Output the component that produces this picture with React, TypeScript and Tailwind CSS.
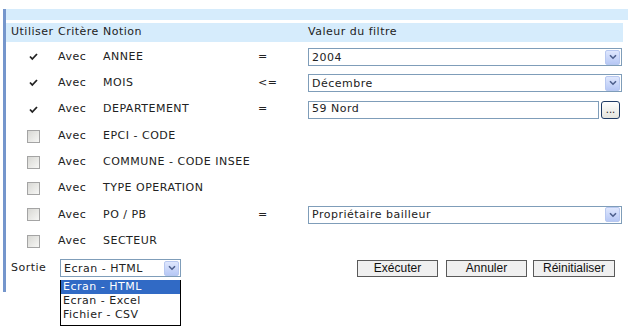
import React from 'react';

type Row = {
  checked: boolean;
  notion: string;
  op?: string;
  value?: { kind: 'select' | 'input'; text: string };
};

const rows: Row[] = [
  { checked: true, notion: 'ANNEE', op: '=', value: { kind: 'select', text: '2004' } },
  { checked: true, notion: 'MOIS', op: '<=', value: { kind: 'select', text: 'Décembre' } },
  { checked: true, notion: 'DEPARTEMENT', op: '=', value: { kind: 'input', text: '59 Nord' } },
  { checked: false, notion: 'EPCI - CODE' },
  { checked: false, notion: 'COMMUNE - CODE INSEE' },
  { checked: false, notion: 'TYPE OPERATION' },
  { checked: false, notion: 'PO / PB', op: '=', value: { kind: 'select', text: 'Propriétaire bailleur' } },
  { checked: false, notion: 'SECTEUR' },
];

function Arrow() {
  return (
    <span className="flex h-[15px] w-[15px] items-center justify-center rounded-[2px] border border-[#b8c8f0] bg-gradient-to-b from-[#dfe7fd] to-[#b7c8f5]">
      <svg width="8" height="6" viewBox="0 0 8 6">
        <path d="M1 1.2 L4 4.2 L7 1.2" fill="none" stroke="#4d5f8c" strokeWidth="1.6" />
      </svg>
    </span>
  );
}

function Select({ text, className }: { text: string; className: string }) {
  return (
    <div className={`flex h-[18px] items-center justify-between border border-[#7f9db9] bg-white pl-[3px] pr-[1px] ${className}`}>
      <span className="leading-none">{text}</span>
      <Arrow />
    </div>
  );
}

function Check({ checked }: { checked: boolean }) {
  if (checked) {
    return (
      <span className="flex h-[13px] w-[13px] items-center justify-center">
        <svg width="9" height="8" viewBox="0 0 9 8">
          <path d="M1 3.5 L3.3 6 L8 1" fill="none" stroke="#222" strokeWidth="1.8" />
        </svg>
      </span>
    );
  }
  return <span className="block h-[13px] w-[13px] border border-[#a4a4a4] bg-gradient-to-br from-[#d8d8d4] to-[#f7f7f5]" />;
}

function Button({ label, className }: { label: string; className: string }) {
  return (
    <button className={`h-[17px] border border-[#5a5a5a] bg-[#f0f0f0] font-['Liberation_Sans',Arial,sans-serif] text-[12px] leading-none tracking-normal text-[#111] ${className}`}>
      {label}
    </button>
  );
}

export default function App() {
  return (
    <div className="h-[335px] w-[632px] bg-white pl-[3px] pt-[9px] font-['DejaVu_Sans',Verdana,sans-serif] text-[11px] tracking-[0.5px] text-[#222]">
      <div className="relative w-[625px] border-l-[3px] border-[#7596cc]">
        <div className="h-[11px] w-[622px] bg-[#d6ecfc]" />
        <div className="mt-[3px] flex h-[19px] w-[617px] items-center bg-[#d6ecfc] pl-[5px]">
          <span className="w-[47px]">Utiliser</span>
          <span className="w-[45px]">Critère</span>
          <span className="w-[205px]">Notion</span>
          <span>Valeur du filtre</span>
        </div>
        <div className="pt-[2px]">
          {rows.map((r) => (
            <div key={r.notion} className="flex h-[26.3px] items-center">
              <span className="w-[52px] pl-[21px]">
                <Check checked={r.checked} />
              </span>
              <span className="w-[45px]">Avec</span>
              <span className="w-[155px]">{r.notion}</span>
              <span className="w-[50px]">{r.op ?? ''}</span>
              {r.value?.kind === 'select' && <Select text={r.value.text} className="w-[314px]" />}
              {r.value?.kind === 'input' && (
                <div className="flex items-center gap-[2px]">
                  <div className="flex h-[18px] w-[291px] items-center border border-[#7f9db9] bg-white pl-[3px]">{r.value.text}</div>
                  <span className="flex h-[18px] w-[19px] items-end justify-center rounded-[3px] border border-[#1f3b66] bg-gradient-to-b from-white to-[#e4e4de] pb-[3px] text-[10px] leading-none tracking-normal">
                    ...
                  </span>
                </div>
              )}
            </div>
          ))}
        </div>
        <div className="flex h-[26px] items-center pt-[2px]">
          <span className="w-[54px] pl-[5px]">Sortie</span>
          <div className="relative">
            <Select text="Ecran - HTML" className="w-[121px]" />
            <div className="absolute left-0 top-[21px] z-10 w-[121px] border border-t-0 border-[#000] bg-white leading-[14px]">
              <div className="bg-[#316ac5] pl-[2px] text-white">Ecran - HTML</div>
              <div className="pl-[2px]">Ecran - Excel</div>
              <div className="pl-[2px] pb-[3px]">Fichier - CSV</div>
            </div>
          </div>
          <div className="ml-[176px] flex items-center">
            <Button label="Exécuter" className="w-[81px]" />
            <Button label="Annuler" className="ml-[8px] w-[81px]" />
            <Button label="Réinitialiser" className="ml-[6px] w-[82px]" />
          </div>
        </div>
        <div className="h-[12px]" />
      </div>
    </div>
  );
}
